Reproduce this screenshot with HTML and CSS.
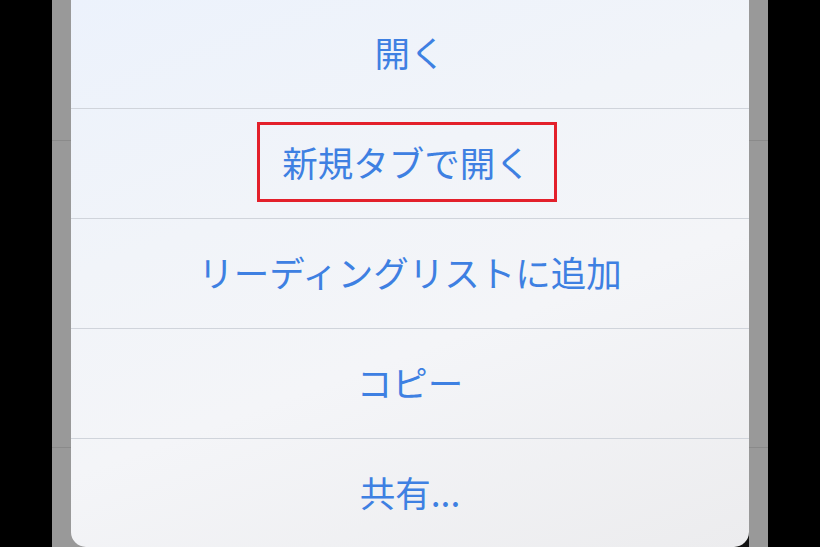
FILE: index.html
```html
<!DOCTYPE html>
<html lang="ja">
<head>
<meta charset="utf-8">
<title>メニュー</title>
<link rel="stylesheet" href="styles.css">
</head>
<body>
<div class="frame">
  <div class="backdrop">
    <div class="sheet">
      <div class="row">開く</div>
      <div class="row"><span class="mark">新規タブで開く</span></div>
      <div class="row">リーディングリストに追加</div>
      <div class="row">コピー</div>
      <div class="row">共有...</div>
    </div>
  </div>
</div>
</body>
</html>
```
FILE: styles.css
```css
html, body {
  margin: 0;
  padding: 0;
  background: #000;
  width: 820px;
  height: 547px;
  overflow: hidden;
}

.frame {
  display: flex;
  justify-content: center;
  height: 547px;
}

.backdrop {
  width: 716px;
  height: 547px;
  padding: 0 19px;
  box-sizing: border-box;
  background:
    linear-gradient(135deg, #7a7a7a 0%, #111 60%) 682px 531px / 15px 16px no-repeat,
    linear-gradient(to bottom, transparent 140px, #8a8a8a 140px, #8a8a8a 141px, transparent 141px),
    linear-gradient(to bottom, transparent 447px, #8a8a8a 447px, #8a8a8a 448px, transparent 448px),
    #999999;
  overflow: hidden;
}

.sheet {
  margin-top: -2px;
  height: 548px;
  display: flex;
  flex-direction: column;
  border-radius: 0 0 15px 15px;
  border-top: 1px solid #c9ccd2;
  background: linear-gradient(160deg, #ecf2fc 0%, #f1f4f9 35%, #f4f5f8 60%, #ececee 100%);
  font-family: "Noto Sans CJK JP", "Noto Sans", sans-serif;
  color: #3e80e2;
  font-size: 35.5px;
  overflow: hidden;
}

.row {
  height: 109px;
  flex: none;
  box-sizing: border-box;
  padding-bottom: 3px;
  display: flex;
  align-items: center;
  justify-content: center;
  line-height: 1;
}

.row + .row {
  height: 110px;
  border-top: 1px solid #d0d4db;
}

.mark {
  display: inline-block;
  border: 3px solid #e3202b;
  padding: 19px 23px 19px 22px;
  margin-right: 6px;
  margin-top: 0;
}
```
